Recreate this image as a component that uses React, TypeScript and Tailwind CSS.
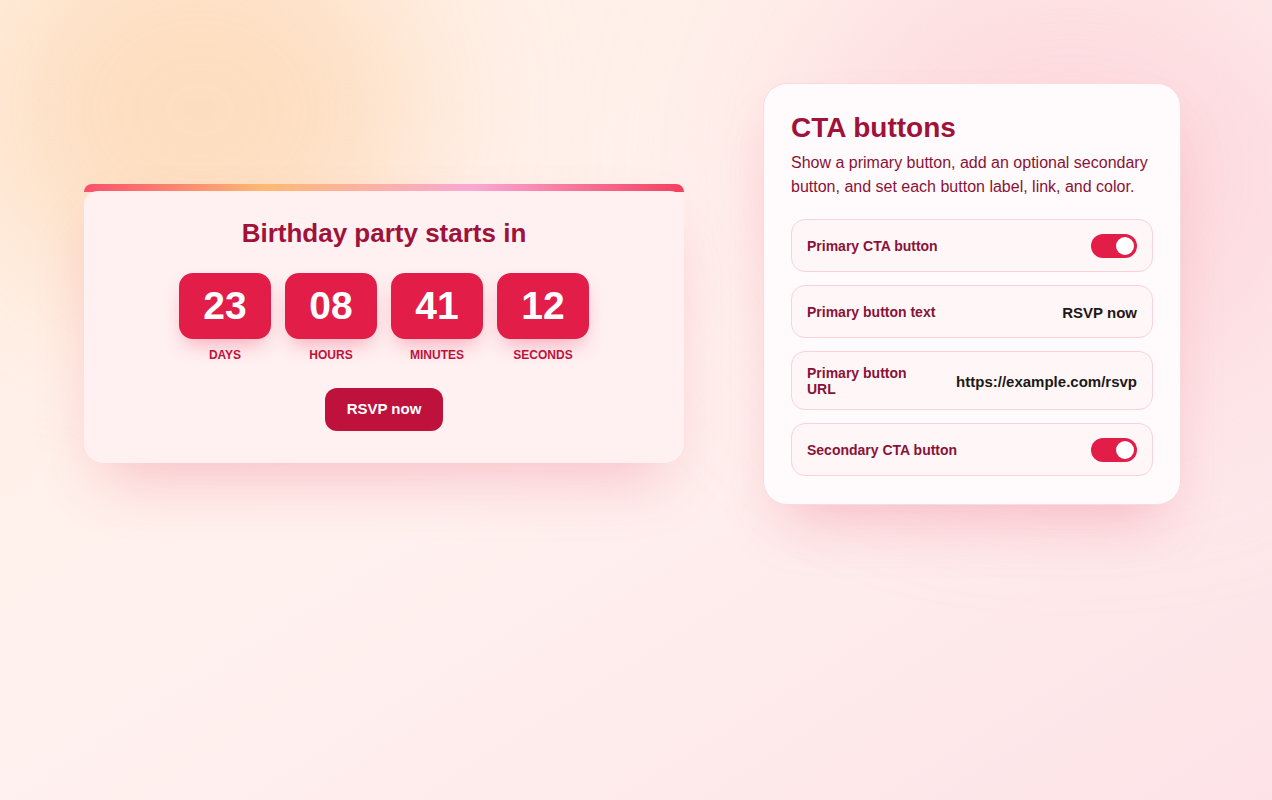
import React from "react";

const units = [
  { value: "23", label: "Days" },
  { value: "08", label: "Hours" },
  { value: "41", label: "Minutes" },
  { value: "12", label: "Seconds" },
];

function Toggle() {
  return (
    <span className="flex h-6 w-[46px] shrink-0 items-center justify-end rounded-full bg-[#e11d48] px-[3px]">
      <span className="h-[18px] w-[18px] rounded-full bg-white" />
    </span>
  );
}

function SettingRow({ label, children, tall }: { label: string; children: React.ReactNode; tall?: boolean }) {
  return (
    <div
      className={`flex items-center justify-between gap-6 rounded-[14px] border border-[#f9d2dc] bg-[#fff6f8] px-[15px] ${
        tall ? "h-[59px]" : "h-[53px]"
      }`}
    >
      <span className="min-w-0 flex-1 text-[14px] font-bold leading-4 text-[#881337]">{label}</span>
      {children}
    </div>
  );
}

function Value({ children }: { children: React.ReactNode }) {
  return <span className="mt-[2px] shrink-0 whitespace-nowrap text-[15px] font-bold leading-4 text-[#1c1917]">{children}</span>;
}

export default function App() {
  return (
    <div
      className="relative min-h-[800px] w-full overflow-hidden bg-gradient-to-br from-[#fff0e4] via-[#fff1ef] to-[#fde3e7]"
      style={{ fontFamily: '"Liberation Sans", Arial, sans-serif' }}
    >
      {/* soft glows in the background */}
      <div className="pointer-events-none absolute -left-[20px] -top-[80px] h-[380px] w-[440px] rounded-full bg-[#fdd9b5] opacity-80 blur-[80px]" />
      <div className="pointer-events-none absolute -right-[80px] -top-[60px] h-[460px] w-[560px] rounded-full bg-[#fcd0d8] opacity-70 blur-[100px]" />

      <div className="relative flex items-start gap-[79px] px-[84px] pt-[83px]">
        {/* Countdown card */}
        <div className="mt-[101px] w-[600px] shrink-0 rounded-[20px] shadow-[0_30px_60px_-20px_rgba(225,29,72,0.25)]">
          <div className="h-2 rounded-t-[8px] [background-image:linear-gradient(90deg,#f9506c,#fdba74_30%,#f9a8d4_65%,#f43f5e)]" />
          <div className="-mt-px flex flex-col items-center rounded-b-[20px] rounded-t-[14px] bg-[#fff0f1] pb-8 pt-[26px]">
            <h1 className="text-[26px] font-bold leading-8 text-[#9f1239]">Birthday party starts in</h1>
            <div className="mt-[24px] flex gap-[14px]">
              {units.map((u) => (
                <div key={u.label} className="flex flex-col items-center">
                  <div className="flex h-[66px] w-[92px] items-center justify-center rounded-[14px] bg-[#e11d48] text-[39px] font-bold text-white shadow-[0_10px_20px_-6px_rgba(225,29,72,0.35)]">
                    {u.value}
                  </div>
                  <span className="mt-[8px] text-[12px] font-bold uppercase leading-4 text-[#be123c]">{u.label}</span>
                </div>
              ))}
            </div>
            <button className="mt-[25px] h-[43px] rounded-[12px] bg-[#be123c] px-[22px] text-[15px] font-bold text-white">
              RSVP now
            </button>
          </div>
        </div>

        {/* Settings panel */}
        <div className="w-[418px] shrink-0 rounded-[24px] border border-[#f8dbe2] bg-[#fffafb] px-[27px] pb-[28px] pt-[26px] shadow-[0_30px_60px_-20px_rgba(225,29,72,0.25)]">
          <h2 className="text-[28px] font-bold leading-9 text-[#9f1239]">CTA buttons</h2>
          <p className="mt-[5px] text-[16px] leading-6 text-[#881337]">
            Show a primary button, add an optional secondary button, and set each button label, link, and color.
          </p>
          <div className="mt-[20px] flex flex-col gap-[13px]">
            <SettingRow label="Primary CTA button">
              <Toggle />
            </SettingRow>
            <SettingRow label="Primary button text">
              <Value>RSVP now</Value>
            </SettingRow>
            <SettingRow label="Primary button URL" tall>
              <Value>https://example.com/rsvp</Value>
            </SettingRow>
            <SettingRow label="Secondary CTA button">
              <Toggle />
            </SettingRow>
          </div>
        </div>
      </div>
    </div>
  );
}
